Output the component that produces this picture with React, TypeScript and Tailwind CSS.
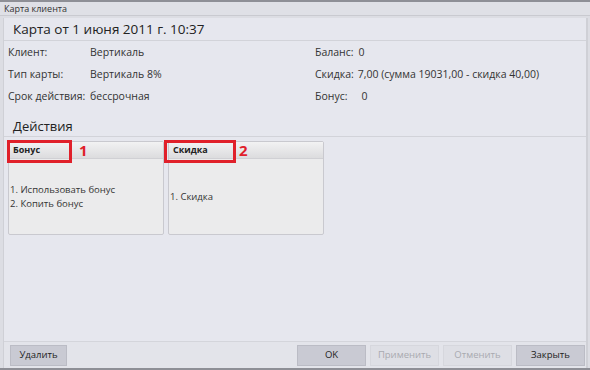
const font = { fontFamily: '"Open Sans", "Noto Sans", sans-serif' };

type Card = { title: string; items: string[]; mark: string; boxLeft: string; boxW: string };

const cards: Card[] = [
  {
    title: 'Бонус',
    items: ['1. Использовать бонус', '2. Копить бонус'],
    mark: '1',
    boxLeft: 'left-[-2px]',
    boxW: 'w-[65px]',
  },
  { title: 'Скидка', items: ['1. Скидка'], mark: '2', boxLeft: 'left-[-5px]', boxW: 'w-[72px]' },
];

function ActionCard({ card }: { card: Card }) {
  return (
    <div className="relative w-[156px] h-[94px] flex flex-col border border-[#c9c9cf] rounded-[2px] bg-[#ebebec]">
      <div className="h-[17px] flex items-center px-[4px] bg-gradient-to-b from-[#f2f2f3] to-[#dcdcde] border-b border-[#d0d0d4]">
        <span className="text-[9px] font-bold text-[#222]">{card.title}</span>
      </div>
      <div className="flex-1 flex flex-col justify-center px-[1px] text-[9.5px] leading-[14px] text-[#333]">
        {card.items.map((it) => (
          <div key={it}>{it}</div>
        ))}
      </div>
      {/* red annotation */}
      <div className={`absolute ${card.boxLeft} top-[-2px] ${card.boxW} h-[23px] border-[3px] border-[#e0202a]`} />
      <span className="absolute left-[70px] top-[-2px] text-[15px] font-bold text-[#e0202a] leading-[20px]">
        {card.mark}
      </span>
    </div>
  );
}

function Btn({ label, w, disabled }: { label: string; w: string; disabled?: boolean }) {
  return (
    <div
      className={`${w} h-[21px] flex items-center justify-center text-[9.5px] border ${
        disabled
          ? 'bg-[#dedfe5] border-[#d6d7dd] text-[#a9aab0]'
          : 'bg-[#c9cad3] border-[#bbbcc5] text-[#222]'
      }`}
    >
      {label}
    </div>
  );
}

export default function App() {
  return (
    <div style={font} className="w-[590px] h-[370px] flex flex-col bg-[#dcdde3] border-t-2 border-b-2 border-[#8e8f96] overflow-hidden">
      <div className="h-[14px] flex items-center px-[4px] bg-[#dfe0e6] border-b border-[#c9cad0]">
        <span className="text-[9px] text-[#333]">Карта клиента</span>
      </div>
      <div className="flex-1 flex flex-col ml-[3px] mr-[2px] mt-[2px] border-r-2 border-l border-[#cfd0d6] bg-[#e6e7ee]">
        <div className="h-[23px] flex items-end px-[9px] pb-[2px] border-b border-[#d2d3d9]">
          <span className="text-[13.5px] text-[#222] leading-[18px]">Карта от 1 июня 2011 г. 10:37</span>
        </div>
        <div className="flex pt-[1px] text-[10.5px] text-[#333]">
          <div className="w-[311px] flex flex-col pl-[4px]">
            {[
              ['Клиент:', 'Вертикаль'],
              ['Тип карты:', 'Вертикаль 8%'],
              ['Срок действия:', 'бессрочная'],
            ].map(([l, v]) => (
              <div key={l} className="h-[22px] flex items-center">
                <span className="w-[82px]">{l}</span>
                <span>{v}</span>
              </div>
            ))}
          </div>
          <div className="flex flex-col">
            <div className="h-[22px] flex items-center gap-[5px]">
              <span>Баланс:</span>
              <span>0</span>
            </div>
            <div className="h-[22px] flex items-center gap-[4px]">
              <span>Скидка:</span>
              <span>7,00 (сумма 19031,00 - скидка 40,00)</span>
            </div>
            <div className="h-[22px] flex items-center gap-[14px]">
              <span>Бонус:</span>
              <span>0</span>
            </div>
          </div>
        </div>
        <div className="mt-[9px] h-[20px] flex items-end px-[9px] pb-[1px] border-b border-[#d2d3d9]">
          <span className="text-[13px] text-[#222] leading-[18px]">Действия</span>
        </div>
        <div className="flex gap-[4px] pl-[4px] pt-[4px]">
          {cards.map((c) => (
            <ActionCard key={c.title} card={c} />
          ))}
        </div>
        <div className="flex-1" />
        <div className="h-[27px] flex items-center pl-[6px] pr-[1px] border-t border-[#d4d5db] bg-[#e3e4ea]">
          <Btn label="Удалить" w="w-[57px]" />
          <div className="flex-1" />
          <div className="flex gap-[4px]">
            <Btn label="OK" w="w-[69px]" />
            <Btn label="Применить" w="w-[69px]" disabled />
            <Btn label="Отменить" w="w-[69px]" disabled />
            <Btn label="Закрыть" w="w-[69px]" />
          </div>
        </div>
      </div>
    </div>
  );
}
